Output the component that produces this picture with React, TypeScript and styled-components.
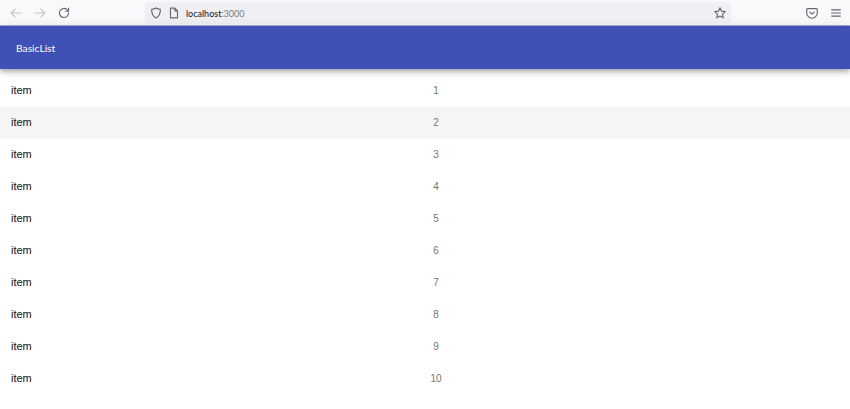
import React from "react";
import styled, { createGlobalStyle } from "styled-components";

const Global = createGlobalStyle`
  html, body { margin: 0; padding: 0; background: #fff; overflow: hidden; }
  body { font-family: "Liberation Sans", Arial, sans-serif; }
`;

const Page = styled.div`
  width: 850px;
  height: 409px;
  overflow: hidden;
  background: #fff;
`;

const BrowserBar = styled.div`
  height: 26px;
  box-sizing: border-box;
  background: #f9f9fb;
  border-bottom: 1px solid #a9add0;
  display: flex;
  align-items: center;
  color: #5b5b66;
`;

const NavGroup = styled.div`
  width: 145px;
  flex: none;
  box-sizing: border-box;
  padding-left: 9px;
  display: flex;
  align-items: center;
  gap: 10px;
`;

const NavIcon = styled.svg<{ $dim?: boolean }>`
  width: 14px;
  height: 14px;
  flex: none;
  fill: none;
  stroke: ${(p) => (p.$dim ? "#c3c3c8" : "#66666f")};
  stroke-width: 1.3;
  stroke-linecap: round;
  stroke-linejoin: round;
`;

const UrlBar = styled.div`
  width: 586px;
  height: 22px;
  flex: none;
  box-sizing: border-box;
  background: #f0f0f4;
  border-radius: 4px;
  padding: 0 4px;
  display: flex;
  align-items: center;
  gap: 4px;
`;

const Url = styled.span`
  font-family: Lato, sans-serif;
  font-size: 9px;
  padding-top: 1px;
  color: #15141a;
  flex: 1;
  margin-left: 1px;
`;

const Port = styled.span`
  color: #7a7a82;
`;

const Tools = styled.div`
  flex: 1;
  display: flex;
  justify-content: flex-end;
  align-items: center;
  gap: 10px;
  padding-right: 7px;
`;

const AppBar = styled.header`
  height: 43px;
  background: #3f51b5;
  box-shadow: 0 2px 4px -1px rgba(0,0,0,.2), 0 4px 5px 0 rgba(0,0,0,.14), 0 1px 10px 0 rgba(0,0,0,.12);
  display: flex;
  align-items: center;
  padding-left: 16px;
  position: relative;
  color: #fff;
  font-family: Lato, sans-serif;
  font-size: 10.25px;
`;

const List = styled.div`
  padding-top: 6px;
`;

const Row = styled.div<{ $hover?: boolean }>`
  height: 32px;
  box-sizing: border-box;
  padding: 0 0 1px 11px;
  display: flex;
  align-items: center;
  background: ${(p) => (p.$hover ? "#f5f5f5" : "transparent")};
`;

const Label = styled.span`
  width: 413px;
  flex: none;
  font-size: 11px;
  margin-bottom: 2px;
  color: #111;
`;

const Count = styled.span`
  width: 24px;
  text-align: center;
  font-size: 10px;
  color: #757575;
`;

export default function App() {
  return (
    <Page>
      <Global />
      <BrowserBar>
        <NavGroup>
          <NavIcon viewBox="0 0 16 16" $dim><path d="M13.5 8H2.5M7 3.5 2.5 8 7 12.5" /></NavIcon>
          <NavIcon viewBox="0 0 16 16" $dim><path d="M2.5 8h11M9 3.5 13.5 8 9 12.5" /></NavIcon>
          <NavIcon viewBox="0 0 16 16"><path d="M13.2 8a5.2 5.2 0 1 1-1.6-3.8L13.2 6M13.2 2.5V6H9.8" /></NavIcon>
        </NavGroup>
        <UrlBar>
          <NavIcon viewBox="0 0 16 16"><path d="M8 2.2c1.5 1 3.2 1.4 5 1.5 0 5-1.6 8.5-5 10.1-3.4-1.6-5-5.1-5-10.1 1.800-.1 3.500-.5 5-1.500Z" /></NavIcon>
          <NavIcon viewBox="0 0 16 16"><path d="M4 2.500h5l3 3v8H4ZM9 2.500v3h3" /></NavIcon>
          <Url>localhost<Port>:3000</Port></Url>
          <NavIcon viewBox="0 0 16 16"><path d="m8 2 1.800 3.900 4.200.5-3.100 2.900.8 4.200L8 11.400 4.300 13.500l.8-4.200L2 6.400l4.200-.5Z" /></NavIcon>
        </UrlBar>
        <Tools>
          <NavIcon viewBox="0 0 16 16"><path d="M3 3h10c.6 0 1 .4 1 1v4a6 6 0 0 1-12 0V4c0-.6.4-1 1-1ZM5.500 7 8 9.300 10.500 7" /></NavIcon>
          <NavIcon viewBox="0 0 16 16"><path d="M3 4.500h10M3 8h10M3 11.500h10" /></NavIcon>
        </Tools>
      </BrowserBar>
      <AppBar>BasicList</AppBar>
      <List>
        {[1, 2, 3, 4, 5, 6, 7, 8, 9, 10].map((n) => (
          <Row key={n} $hover={n === 2}>
            <Label>item</Label>
            <Count>{n}</Count>
          </Row>
        ))}
      </List>
    </Page>
  );
}
